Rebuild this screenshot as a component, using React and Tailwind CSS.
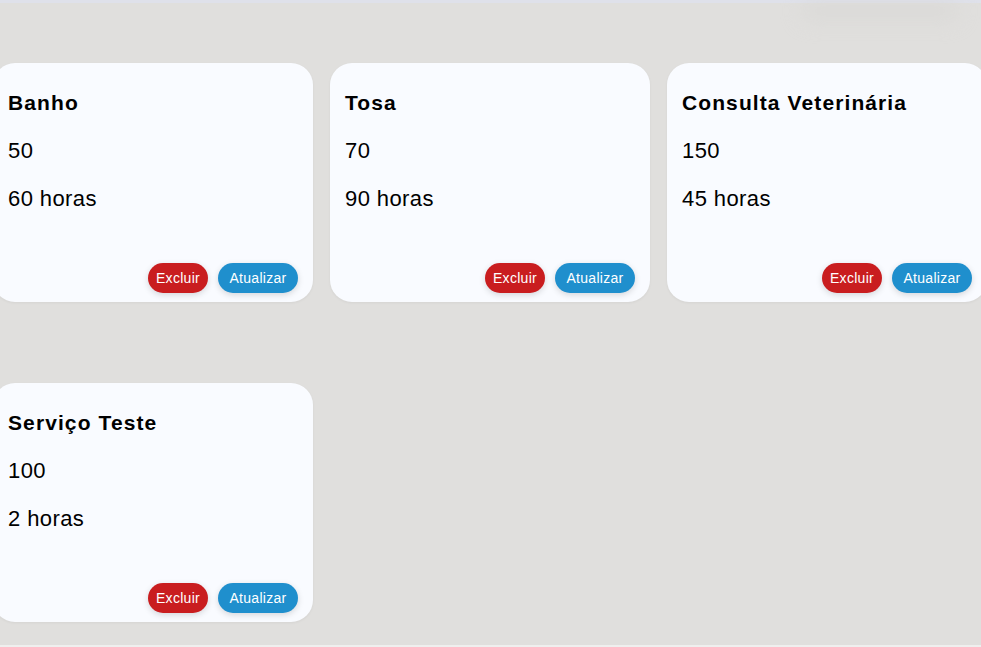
import React from "react";

const services = [
  { name: "Banho", price: "50", time: "60 horas" },
  { name: "Tosa", price: "70", time: "90 horas" },
  { name: "Consulta Veterinária", price: "150", time: "45 horas" },
  { name: "Serviço Teste", price: "100", time: "2 horas" },
];

function Card({ s }) {
  return (
    <div className="w-[320px] h-[239px] rounded-[22px] bg-[#f9fbff] shadow-[0_1px_3px_rgba(0,0,0,0.05)] flex flex-col pt-[28px] px-[15px] pb-[9px]">
      <h3 className="text-[21px] leading-[24px] font-bold tracking-[1.1px] text-black">{s.name}</h3>
      <p className="mt-[24px] text-[22px] leading-[24px] tracking-[0.4px] text-black">{s.price}</p>
      <p className="mt-[24px] text-[22px] leading-[24px] tracking-[0.4px] text-black">{s.time}</p>
      <div className="mt-auto flex justify-end gap-[10px]">
        <button className="w-[60px] h-[30px] rounded-full bg-[#c91d1f] text-white text-[14px] tracking-[0.3px] shadow-[0_2px_6px_rgba(0,0,0,0.15)]">
          Excluir
        </button>
        <button className="w-[80px] h-[30px] rounded-full bg-[#1f8fcd] text-white text-[14px] tracking-[0.3px] shadow-[0_2px_6px_rgba(0,0,0,0.15)]">
          Atualizar
        </button>
      </div>
    </div>
  );
}

export default function App() {
  return (
    <div
      className="relative w-[981px] h-[647px] overflow-hidden bg-[#e0dfdd] flex flex-col"
      style={{ fontFamily: '"Liberation Sans", Arial, sans-serif' }}
    >
      <div className="h-[3px] bg-[#dfe1ea] shrink-0" />
      <div className="absolute left-[800px] top-[0px] w-[160px] h-[22px] rounded-full bg-[#d6d5d3] blur-[10px] opacity-50" />
      <div className="relative flex-1 pt-[60px] ml-[-7px]">
        <div className="grid grid-cols-[repeat(3,320px)] gap-x-[17px] gap-y-[81px]">
          {services.map((s) => (
            <Card key={s.name} s={s} />
          ))}
        </div>
      </div>
      <div className="h-[2px] bg-[#efefee] shrink-0" />
    </div>
  );
}
